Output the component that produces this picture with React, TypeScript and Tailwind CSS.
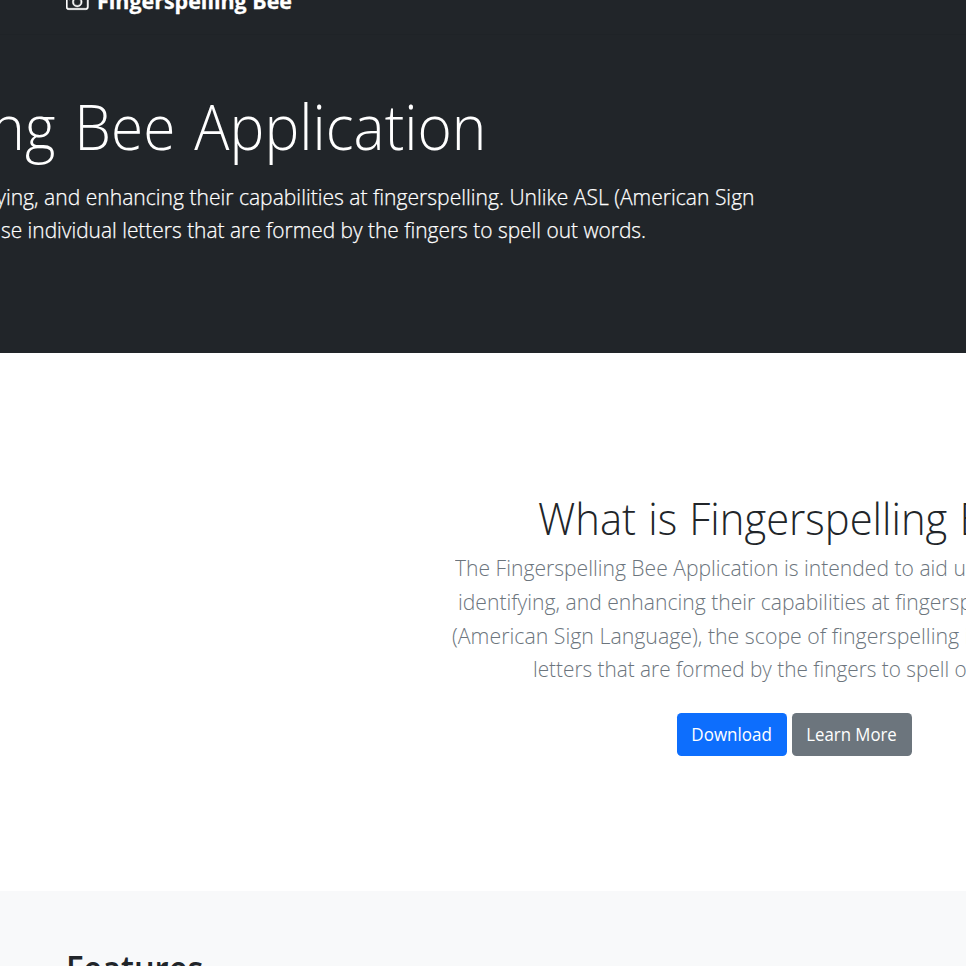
import type { ReactNode } from "react";
import { BsCamera } from "react-icons/bs";

function Line({ className, children }: { className: string; children: ReactNode }) {
  return <span className={`block w-fit whitespace-nowrap ${className}`}>{children}</span>;
}

export default function App() {
  return (
    <div className="h-[966px] w-[966px] overflow-hidden bg-white font-['Open_Sans','Noto_Sans',sans-serif] text-[#212529]">
      <header className="flex h-[35px] items-start overflow-hidden border-b border-[#1f2327] bg-[#212529] pl-[66px] text-white">
        <BsCamera className="-mt-[10px] mr-[8px] h-[22.5px] w-[22.5px] shrink-0 [stroke-width:0.3px]" />
        <Line className="-mt-[16px] origin-left scale-x-[0.975] text-[22px] leading-[33px] font-bold [-webkit-text-stroke:0.3px_white]">Fingerspelling Bee</Line>
      </header>

      <section className="h-[318px] overflow-hidden bg-[#212529] pt-[53px] text-white">
        <h1 className="flex w-[486px] justify-end text-[63px] leading-[76px] font-light">
          <Line className="origin-right scale-x-[0.93] [word-spacing:4px]">ng Bee Application</Line>
        </h1>
        <div className="mt-[16px] text-[22px] leading-[33px] font-light [-webkit-text-stroke:0.25px_white]">
          <p className="flex w-[755px] justify-end">
            <Line className="origin-right scale-x-[0.958]">ying, and enhancing their capabilities at fingerspelling. Unlike ASL (American Sign</Line>
          </p>
          <p className="flex w-[646px] justify-end">
            <Line className="origin-right scale-x-[0.95]">se individual letters that are formed by the fingers to spell out words.</Line>
          </p>
        </div>
      </section>

      <section className="h-[538px] overflow-hidden pt-[138px]">
        <h2 className="pl-[538px] text-[45px] leading-[54px] font-light">
          <Line className="origin-left scale-x-[0.928] [word-spacing:1.5px]">What is Fingerspelling B</Line>
        </h2>
        <div className="mt-[6px] text-[22px] leading-[33.75px] font-light text-[#6c757d]">
          <Line className="ml-[455px] origin-left scale-x-[0.959]">The Fingerspelling Bee Application is intended to aid u</Line>
          <Line className="ml-[458px] origin-left scale-x-[0.96]">identifying, and enhancing their capabilities at fingersp</Line>
          <Line className="ml-[452px] origin-left scale-x-[0.969]">(American Sign Language), the scope of fingerspelling i</Line>
          <Line className="ml-[533px] origin-left scale-x-[0.944]">letters that are formed by the fingers to spell o</Line>
        </div>
        <div className="mt-[27px] flex gap-[5px] pl-[677px] text-[18px] leading-[43px] text-white">
          <button className="flex h-[43px] w-[110px] justify-center rounded-[4.5px] bg-[#0d6efd]">
            <Line className="scale-x-[0.945]">Download</Line>
          </button>
          <button className="flex h-[43px] w-[120px] justify-center rounded-[4.5px] bg-[#6c757d]">
            <Line className="scale-x-[0.932]">Learn More</Line>
          </button>
        </div>
      </section>

      <section className="h-[75px] overflow-hidden bg-[#f8f9fa] pt-[54px] pl-[66px]">
        <h2 className="text-[36px] leading-[48px] font-semibold">
          <Line className="origin-left scale-x-[0.905]">Features</Line>
        </h2>
      </section>
    </div>
  );
}
